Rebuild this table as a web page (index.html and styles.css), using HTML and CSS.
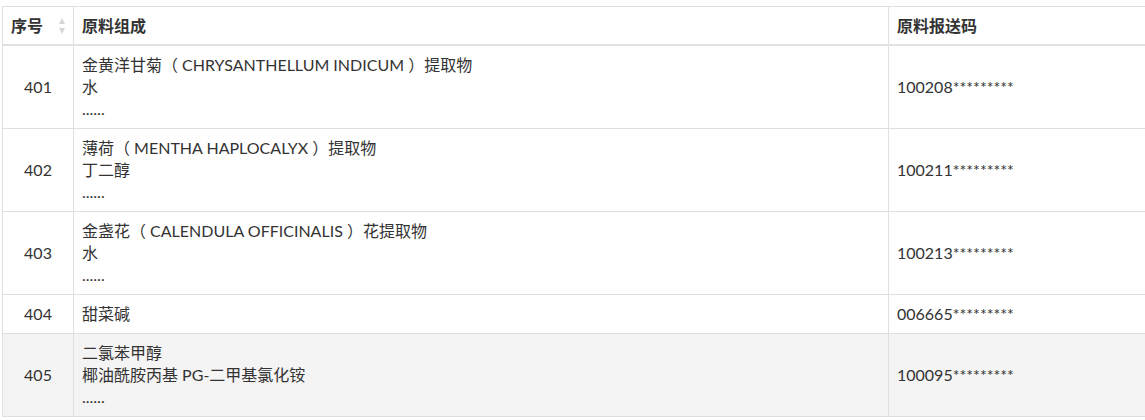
FILE: index.html
```html
<!DOCTYPE html>
<html>

<head>
    <meta charset="utf-8">
    <title>原料组成</title>
    <link rel="stylesheet" href="styles.css">
</head>

<body>
    <table class="grid">
        <colgroup>
            <col class="c-no">
            <col class="c-name">
            <col class="c-code">
        </colgroup>
        <thead>
            <tr>
                <th class="sortable">序号<span class="sort"><i class="up"></i><i class="down"></i></span></th>
                <th>原料组成</th>
                <th>原料报送码</th>
            </tr>
        </thead>
        <tbody>
            <tr>
                <td class="no">401</td>
                <td>金黄洋甘菊（ CHRYSANTHELLUM INDICUM ）提取物<br>水<br>......</td>
                <td>100208*********</td>
            </tr>
            <tr>
                <td class="no">402</td>
                <td>薄荷（ MENTHA HAPLOCALYX ）提取物<br>丁二醇<br>......</td>
                <td>100211*********</td>
            </tr>
            <tr>
                <td class="no">403</td>
                <td>金盏花（ CALENDULA OFFICINALIS ）花提取物<br>水<br>......</td>
                <td>100213*********</td>
            </tr>
            <tr>
                <td class="no">404</td>
                <td>甜菜碱</td>
                <td>006665*********</td>
            </tr>
            <tr class="hover">
                <td class="no">405</td>
                <td>二氯苯甲醇<br>椰油酰胺丙基 PG-二甲基氯化铵<br>......</td>
                <td>100095*********</td>
            </tr>
        </tbody>
    </table>
</body>

</html>
```

FILE: styles.css
```css
html,
body {
    margin: 0;
    padding: 0;
    overflow: hidden;
}

body {
    background-color: #fff;
    color: #333;
    font-family: Lato, "Noto Sans CJK SC", sans-serif;
    font-size: 16px;
    padding: 6px 0 0 2px;
}

table.grid {
    border-collapse: collapse;
    table-layout: fixed;
    width: 1200px;
    border: 1px solid #e0e0e0;
}

col.c-no {
    width: 71px;
}

col.c-name {
    width: 815px;
}

th,
td {
    border: 1px solid #e0e0e0;
    padding: 8px;
    line-height: 22px;
    text-align: left;
    vertical-align: middle;
}

th {
    font-weight: bold;
    padding-bottom: 7px;
    border-bottom: 2px solid #dfe2e5;
}

th.sortable {
    position: relative;
}

.sort {
    position: absolute;
    right: 7px;
    top: 11px;
    width: 7px;
    height: 16px;
}

.sort i {
    position: absolute;
    left: 0;
    width: 0;
    height: 0;
    border-left: 3.5px solid transparent;
    border-right: 3.5px solid transparent;
}

.sort .up {
    top: 0;
    border-bottom: 6px solid #d5d5d5;
}

.sort .down {
    bottom: 0;
    border-top: 6px solid #d5d5d5;
}

td.no {
    text-align: center;
}

tr.hover td {
    background-color: #f4f4f4;
}
```
